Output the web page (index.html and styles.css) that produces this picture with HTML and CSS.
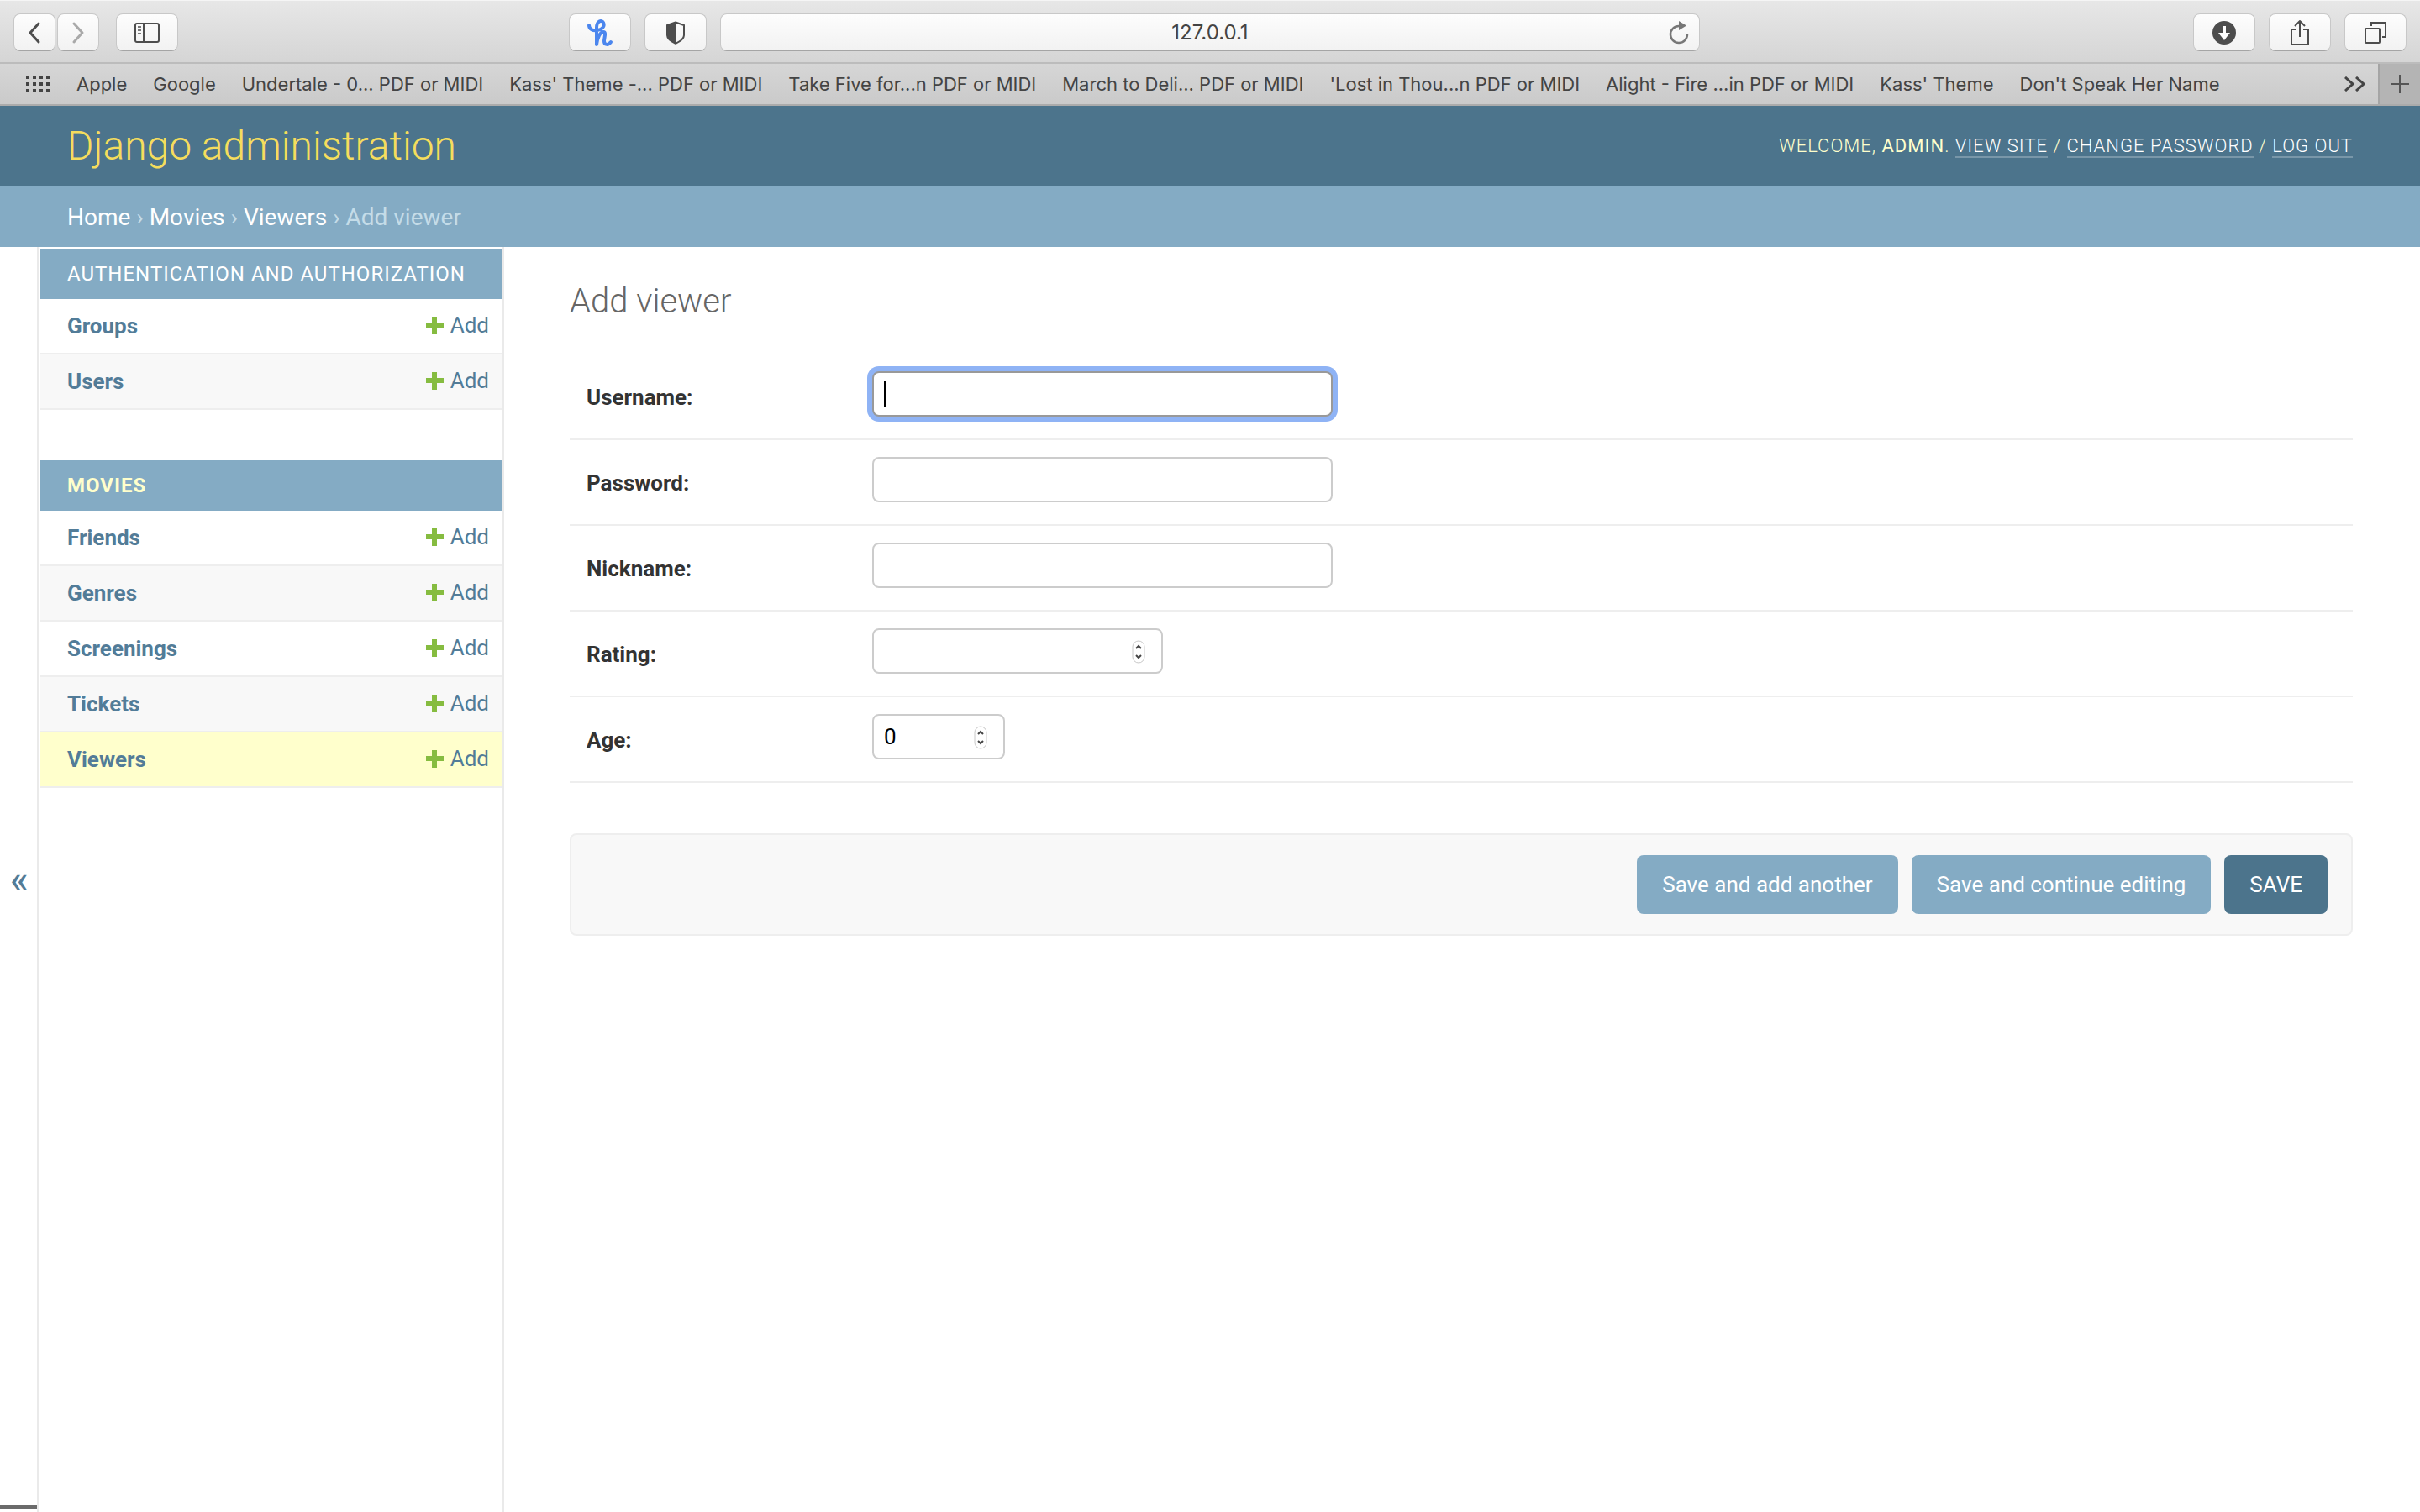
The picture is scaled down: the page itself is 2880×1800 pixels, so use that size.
FILE: index.html
```html
<!DOCTYPE html>
<html lang="en">
<head>
  <meta charset="UTF-8" />
  <meta name="viewport" content="width=device-width, initial-scale=1.0"/>
  <title>Add viewer | Django site admin</title>
  <link rel="stylesheet" href="styles.css">
</head>
<body>

  <!-- BROWSER TOOLBAR -->
  <div class="toolbar">
    <div class="tools">
      <div class="nav-buttons">
        <button class="tool narrow" aria-label="Back">
          <svg width="16" height="28" viewBox="0 0 16 28"><path d="M13 3 3 14l10 11" fill="none" stroke="#4d4d4d" stroke-width="3" stroke-linecap="round" stroke-linejoin="round"/></svg>
        </button>
        <button class="tool narrow" aria-label="Forward">
          <svg width="16" height="28" viewBox="0 0 16 28"><path d="M3 3l10 11L3 25" fill="none" stroke="#a9a9a9" stroke-width="3" stroke-linecap="round" stroke-linejoin="round"/></svg>
        </button>
      </div>
      <button class="tool" aria-label="Show sidebar">
        <svg width="30" height="24" viewBox="0 0 30 24"><rect x="1" y="1" width="28" height="22" rx="2" fill="none" stroke="#4d4d4d" stroke-width="2"/><path d="M11 1v22" stroke="#4d4d4d" stroke-width="2"/><path d="M4 5h4M4 9h4M4 13h4" stroke="#777" stroke-width="2"/></svg>
      </button>
      <button class="tool push" aria-label="Honey">
        <svg width="32" height="34" viewBox="0 0 32 34"><path d="M3 8c0 5 5 7 10 6 6-1 9-5 7-9-2-4-8-2-8 6v20c1-8 4-15 8-15 4 0 1 7 1 11 0 5 5 5 8 1" fill="none" stroke="#4b86ee" stroke-width="4" stroke-linecap="round" stroke-linejoin="round"/></svg>
      </button>
      <button class="tool" aria-label="Privacy report">
        <svg width="24" height="28" viewBox="0 0 24 28"><path d="M12 1.500 22 5v12c0 4-5 7.500-10 9.800C7 24.500 2 21 2 17V5z" fill="none" stroke="#4d4d4d" stroke-width="2" stroke-linejoin="round"/><path d="M12 1v26C7 24.500 2 21 2 17V5z" fill="#4d4d4d"/></svg>
      </button>
    </div>
    <div class="address">
      <input type="text" value="127.0.0.1" aria-label="Address" />
      <button class="reload" aria-label="Reload">
        <svg width="24" height="28" viewBox="0 0 24 28"><path d="M12 6a10 10 0 1 0 10 10" fill="none" stroke="#777" stroke-width="2.500"/><path d="M12 0v11l9-5.500z" fill="#777"/></svg>
      </button>
    </div>
    <div class="tools">
      <button class="tool push" aria-label="Downloads">
        <svg width="28" height="28" viewBox="0 0 28 28"><circle cx="14" cy="14" r="14" fill="#4d4d4d"/><path d="M12 6h4v8h5l-7 9-7-9h5z" fill="#fff"/></svg>
      </button>
      <button class="tool" aria-label="Share">
        <svg width="24" height="32" viewBox="0 0 24 32"><path d="M8 12H2v18h20V12h-6M12 21V3M6 8l6-6 6 6" fill="none" stroke="#4d4d4d" stroke-width="2" stroke-linejoin="round"/></svg>
      </button>
      <button class="tool" aria-label="Show all tabs">
        <svg width="26" height="26" viewBox="0 0 26 26"><rect x="1" y="8" width="17" height="17" rx="1" fill="none" stroke="#4d4d4d" stroke-width="2"/><path d="M8 5V1h17v17h-4" fill="none" stroke="#4d4d4d" stroke-width="2"/></svg>
      </button>
    </div>
  </div>

  <!-- BOOKMARKS -->
  <div class="bookmarks">
    <svg class="grid-icon" width="29" height="20" viewBox="0 0 29 20"><path d="M0 2h28M0 10h28M0 18h28" stroke="#444" stroke-width="4" stroke-dasharray="4 4"/></svg>
    <a href="#">Apple</a>
    <a href="#">Google</a>
    <a href="#">Undertale - 0... PDF or MIDI</a>
    <a href="#">Kass' Theme -... PDF or MIDI</a>
    <a href="#">Take Five for...n PDF or MIDI</a>
    <a href="#">March to Deli... PDF or MIDI</a>
    <a href="#">'Lost in Thou...n PDF or MIDI</a>
    <a href="#">Alight - Fire ...in PDF or MIDI</a>
    <a href="#">Kass' Theme</a>
    <a href="#">Don't Speak Her Name</a>
    <button class="more" aria-label="More bookmarks">
      <svg width="26" height="18" viewBox="0 0 26 18"><path d="M2 1l9 8-9 8M15 1l9 8-9 8" fill="none" stroke="#444" stroke-width="3"/></svg>
    </button>
    <button class="new-tab" aria-label="New tab">
      <svg width="24" height="24" viewBox="0 0 24 24"><path d="M12 1v22M1 12h22" stroke="#555" stroke-width="2"/></svg>
    </button>
  </div>

  <!-- HEADER -->
  <header class="header">
    <div class="site-name"><a href="#">Django administration</a></div>
    <div class="user-tools">
      Welcome, <strong>admin</strong>. <a href="#">View site</a> / <a href="#">Change password</a> / <a href="#">Log out</a>
    </div>
  </header>

  <nav class="breadcrumbs">
    <a href="#">Home</a> &rsaquo; <a href="#">Movies</a> &rsaquo; <a href="#">Viewers</a> &rsaquo; Add viewer
  </nav>

  <div class="main">
    <div class="toggle">
      <button class="toggle-btn" aria-label="Toggle navigation">&laquo;</button>
      <span class="status-edge"></span>
    </div>

    <!-- SIDEBAR -->
    <nav class="sidebar">
      <table class="module">
        <caption><a href="#">Authentication and Authorization</a></caption>
        <tr><th scope="row"><a href="#">Groups</a></th><td><a href="#" class="add-link">Add</a></td></tr>
        <tr><th scope="row"><a href="#">Users</a></th><td><a href="#" class="add-link">Add</a></td></tr>
      </table>
      <table class="module current-app">
        <caption><a href="#">Movies</a></caption>
        <tr><th scope="row"><a href="#">Friends</a></th><td><a href="#" class="add-link">Add</a></td></tr>
        <tr><th scope="row"><a href="#">Genres</a></th><td><a href="#" class="add-link">Add</a></td></tr>
        <tr><th scope="row"><a href="#">Screenings</a></th><td><a href="#" class="add-link">Add</a></td></tr>
        <tr><th scope="row"><a href="#">Tickets</a></th><td><a href="#" class="add-link">Add</a></td></tr>
        <tr class="current-model"><th scope="row"><a href="#">Viewers</a></th><td><a href="#" class="add-link">Add</a></td></tr>
      </table>
    </nav>

    <!-- FORM -->
    <main class="content">
      <h1>Add viewer</h1>
      <form>
        <div class="form-row">
          <label for="id_username">Username:</label>
          <div class="field caret"><input type="text" id="id_username" autofocus /></div>
        </div>
        <div class="form-row">
          <label for="id_password">Password:</label>
          <div class="field"><input type="text" id="id_password" /></div>
        </div>
        <div class="form-row">
          <label for="id_nickname">Nickname:</label>
          <div class="field"><input type="text" id="id_nickname" /></div>
        </div>
        <div class="form-row">
          <label for="id_rating">Rating:</label>
          <div class="field">
            <input type="number" id="id_rating" class="decimal" />
            <svg class="stepper" width="16" height="28" viewBox="0 0 16 28"><rect x="1" y="1" width="14" height="26" rx="7" fill="#fff" stroke="#c8c8c8"/><path d="M5 10l3-3 3 3M5 18l3 3 3-3" fill="none" stroke="#444" stroke-width="2"/></svg>
          </div>
        </div>
        <div class="form-row">
          <label for="id_age">Age:</label>
          <div class="field">
            <input type="number" id="id_age" class="integer" value="0" />
            <svg class="stepper" width="16" height="28" viewBox="0 0 16 28"><rect x="1" y="1" width="14" height="26" rx="7" fill="#fff" stroke="#c8c8c8"/><path d="M5 10l3-3 3 3M5 18l3 3 3-3" fill="none" stroke="#444" stroke-width="2"/></svg>
          </div>
        </div>
        <div class="submit-row">
          <button type="button">Save and add another</button>
          <button type="button">Save and continue editing</button>
          <button type="button" class="default">SAVE</button>
        </div>
      </form>
    </main>
  </div>

</body>
</html>
```
FILE: styles.css
```css
* { box-sizing: border-box; }
body { margin: 0; min-height: 100vh; display: flex; flex-direction: column; background: #fff; color: #333; font-family: Roboto, "Liberation Sans", sans-serif; font-size: 26px; }
a { color: #527c98; text-decoration: none; }
button { font-family: inherit; border: none; cursor: pointer; padding: 0; }
svg { display: block; }

/* browser */
.toolbar { display: grid; grid-template-columns: 1fr minmax(0, 1166px) 1fr; gap: 16px; height: 76px; padding: 15px 16px 0; background: linear-gradient(#e7e7e7, #d5d5d5); border-top: 1px solid #f5f5f5; border-bottom: 2px solid #bcbcbc; }
.tools { display: flex; gap: 16px; }
.nav-buttons { display: flex; gap: 2px; margin-right: 4px; }
.tool, .address { height: 45px; border-radius: 8px; background: linear-gradient(#fdfdfd, #f2f2f2); border: 1px solid #c8c8c8; border-bottom-color: #a5a5a5; }
.tool { width: 74px; display: flex; align-items: center; justify-content: center; }
.narrow { width: 50px; }
.push { margin-left: auto; }
.address { display: flex; align-items: center; padding: 0 12px 0 36px; }
.address input { flex: 1; min-width: 0; border: none; outline: none; background: none; text-align: center; color: #444; font: 24px Inter, sans-serif; }
.reload { background: none; }

.bookmarks { display: flex; align-items: center; gap: 31px; height: 50px; padding-left: 31px; background: linear-gradient(#d6d6d6, #cacaca); border-bottom: 2px solid #ababab; font: 22px Inter, sans-serif; white-space: nowrap; }
.bookmarks a { color: #444; }
.more { margin-left: auto; background: none; }
.new-tab { align-self: stretch; width: 50px; margin-left: -16px; display: flex; align-items: center; justify-content: center; background: #b4b4b4; border-left: 2px solid #a5a5a5; }

/* header */
.header { display: flex; align-items: center; justify-content: space-between; height: 96px; padding: 0 80px 2px; background: #4c748c; color: #ffc; }
.site-name { font-size: 48px; font-weight: 300; }
.site-name a { color: #f5dd5d; }
.user-tools { font-size: 22px; font-weight: 300; letter-spacing: 1px; text-transform: uppercase; }
.user-tools a { color: #fff; border-bottom: 2px solid rgba(255, 255, 255, 0.25); }
.breadcrumbs { height: 72px; padding: 0 80px; line-height: 74px; background: #84abc4; color: #c4dce8; font-size: 28px; }
.breadcrumbs a { color: #fff; }

.main { flex: 1; display: flex; }
.toggle { position: relative; flex: 0 0 46px; display: flex; border-right: 2px solid #eaeaea; }
.toggle-btn { flex: 1; padding-left: 2px; background: #fff; color: #527c98; font-size: 44px; font-weight: 500; }
.status-edge { position: absolute; left: 0; right: 0; bottom: 4px; height: 4px; background: #6b6b6b; }

/* sidebar */
.sidebar { flex: 0 0 554px; padding: 2px 0 0 2px; border-right: 2px solid #eaeaea; }
.module { width: 100%; margin-bottom: 60px; border-spacing: 0; }
.module caption { height: 60px; padding: 0 32px; line-height: 60px; background: #84abc4; text-align: left; font-size: 24px; letter-spacing: 1px; text-transform: uppercase; }
.module caption a { color: #fff; }
.current-app caption a { color: #ffc; font-weight: bold; }
.module tr:nth-child(even) { background: #f8f8f8; }
.module tr.current-model { background: #ffc; }
.module th, .module td { height: 66px; border-bottom: 2px solid #eee; }
.module th { padding: 0 32px; text-align: left; font-weight: bold; }
.module td { padding: 0 16px; text-align: right; }
.add-link { display: inline-flex; align-items: center; gap: 8px; }
.add-link::before { content: ""; width: 21px; height: 21px; background: linear-gradient(#86bc40, #86bc40) center / 21px 6px no-repeat, linear-gradient(#86bc40, #86bc40) center / 6px 21px no-repeat; }

/* form */
.content { flex: 1; padding: 40px 80px 0 78px; }
h1 { margin: 0 0 38px; color: #666; font-size: 40px; font-weight: 300; line-height: 50px; }
.form-row { display: flex; height: 102px; padding: 20px; border-bottom: 2px solid #eee; }
.form-row label { width: 340px; padding-top: 16px; font-weight: bold; line-height: 30px; }
.field { position: relative; }
.field input { display: block; width: 548px; height: 54px; padding: 10px 12px; border: 2px solid #ccc; border-radius: 8px; background: #fff; color: #000; font: 26px Roboto, sans-serif; appearance: textfield; caret-color: transparent; }
.field input:focus { border-color: #999; outline: none; box-shadow: 0 0 0 6px #8fb3f5; }
.field input::-webkit-inner-spin-button { display: none; }
.field .decimal { width: 346px; }
.field .integer { width: 158px; }
.caret::after { content: ""; position: absolute; left: 14px; top: 12px; width: 2px; height: 30px; background: #000; }
.stepper { position: absolute; right: 21px; top: 14px; }

.submit-row { display: flex; justify-content: flex-end; gap: 16px; margin-top: 60px; padding: 24px 28px; background: #f8f8f8; border: 2px solid #eee; border-radius: 8px; }
.submit-row button { height: 70px; padding: 0 30px; border-radius: 8px; background: #84abc4; color: #fff; font-size: 26px; }
.submit-row .default { background: #4c748c; }
```
